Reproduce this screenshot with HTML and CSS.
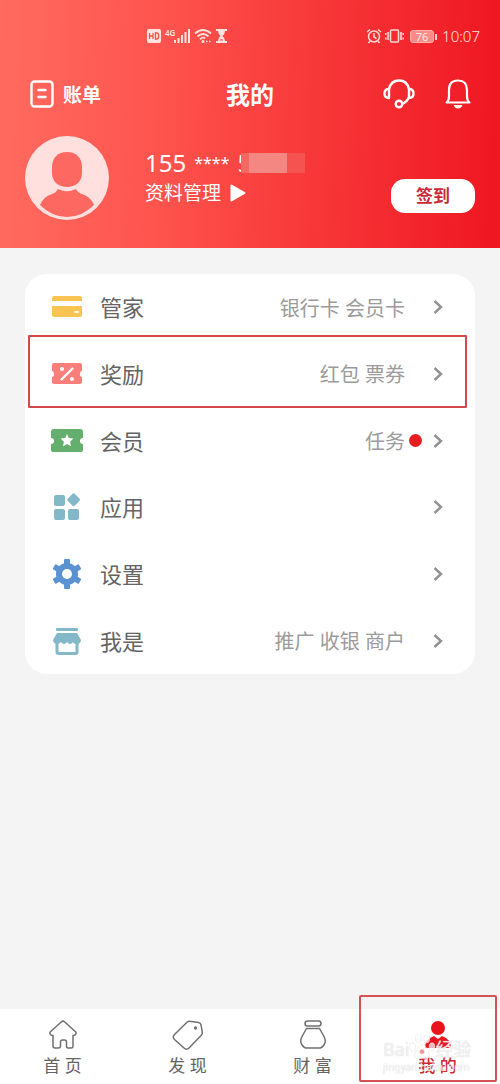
FILE: index.html
```html
<!DOCTYPE html>
<html lang="zh-CN">
<head>
<meta charset="utf-8">
<meta name="viewport" content="width=device-width, initial-scale=1">
<title>我的</title>
<link rel="stylesheet" href="styles.css">
</head>
<body>
<div class="app">
  <header class="header">
    <div class="status">
      <div class="status-group">
        <svg width="14" height="14" viewBox="0 0 14 14"><rect width="14" height="14" rx="2" fill="#ffe3e0"/><path d="M2.500 4v6M6 4v6M2.500 7H6M8.500 4v6h1.200q2 0 2-3t-2-3z" fill="none" stroke="#f0524c" stroke-width="1.300"/></svg>
        <span class="net">4G</span>
        <svg class="signal" width="16" height="14" viewBox="0 0 16 14"><path d="M1 11v3M4.500 9v5M8 6v8M11.500 3v11M15 0v14" stroke="#ffe3e0" stroke-width="2"/></svg>
        <svg width="18" height="14" viewBox="0 0 18 14" fill="none" stroke="#ffe3e0" stroke-width="1.700"><path d="M1 4.500Q9-2.500 17 4.500M3.500 7.500Q9 2.500 14.500 7.500M6 10.300Q9 7.500 11 9.500"/><circle cx="9" cy="12.500" r=".7"/><path d="M12 12.500h1.500M15 12.500h1.500"/></svg>
        <svg width="11" height="14" viewBox="0 0 11 14"><path d="M0 0h11v2H0zM0 12h11v2H0zM2 2h7q0 3-2.500 5Q9 9 9 12H2q0-3 2.500-5Q2 5 2 2z" fill="#ffe3e0"/><path d="M3.500 11.500q2-3 4 0z" fill="#f0524c"/></svg>
      </div>
      <div class="status-group right">
        <svg width="16" height="16" viewBox="0 0 16 16" fill="none" stroke="#ffd8d4" stroke-width="1.500"><circle cx="8" cy="8.500" r="5.500"/><path d="M8 5v4l2.500 1.500M1 4l3-2.500M15 4l-3-2.500M4 13l-1.500 2M12 13l1.500 2"/></svg>
        <svg width="19" height="14" viewBox="0 0 19 14" fill="none" stroke="#ffd8d4" stroke-width="1.600"><rect x="5.500" y="1" width="8" height="12" rx="1"/><path d="M3 3v8M16 3v8M.8 4v2M.8 8.500v2M18.200 4v2M18.200 8.500v2"/></svg>
        <span class="battery">76</span>
        <time class="clock">10:07</time>
      </div>
    </div>
    <div class="topbar">
      <button class="bill">
        <svg width="24" height="28" viewBox="0 0 24 28" fill="none" stroke="#fff" stroke-width="2.400" stroke-linecap="round"><rect x="1.500" y="1.500" width="21" height="25" rx="3"/><path d="M8.500 10h7M8.500 17h7"/></svg>
        <span>账单</span>
      </button>
      <h1 class="title">我的</h1>
      <div class="actions">
        <button aria-label="客服"><svg width="32" height="30" viewBox="0 0 32 30" fill="none" stroke="#fff" stroke-width="2.400"><path d="M6 10Q8 1.500 16 1.500T26 10M26 18q-2 5-7 7"/><path d="M6 10v9Q1.500 19 1.500 14.500T6 10zM26 10q4.500 0 4.500 4.500T26 19z" stroke-linejoin="round"/><circle cx="16" cy="25" r="3.300"/></svg></button>
        <button aria-label="通知"><svg width="26" height="30" viewBox="0 0 26 30" fill="none" stroke="#fff" stroke-width="2.200" stroke-linejoin="round"><path d="M1.500 23.500q2.500-2 2.500-6V11q0-9.500 9-9.500T22 11v6.500q0 4 2.500 6z"/><path d="M8.500 26h9q-1.500 3.500-4.500 3.500T8.500 26z" fill="#fff" stroke="none"/></svg></button>
      </div>
    </div>
    <div class="profile">
      <svg width="84" height="84" viewBox="0 0 84 84"><circle cx="42" cy="42" r="42" fill="#ffe0de"/><path d="M27 31C27 22 33 16 42 16s15 6 15 15v6c0 9-7 14-15 14s-15-5-15-14z" fill="#fd6860"/><path d="M33 53q9 4.500 18 0 2 4 6 5 9 3 12 11Q57 81 42 81T15 69q3-8 12-11 4-1 6-5z" fill="#fd6860"/></svg>
      <div class="who">
        <div class="phone"><span>155</span><span class="stars">****</span><span>5</span><span class="mask"></span></div>
        <a class="manage" href="#">资料管理<svg width="16" height="18" viewBox="0 0 16 18"><path d="M1.500 1.500v15L14.500 9z" fill="#fff" stroke="#fff" stroke-width="2" stroke-linejoin="round"/></svg></a>
      </div>
      <button class="checkin">签到</button>
    </div>
  </header>

  <main class="main">
    <nav class="card">
      <a class="row" href="#">
        <svg width="32" height="32" viewBox="0 0 32 32"><path d="M3 5h26q2 0 2 2v3H1V7q0-2 2-2zM1 15h30v9q0 2-2 2H3q-2 0-2-2z" fill="#fac452"/><rect x="23" y="20" width="5" height="2" rx="1" fill="#fff"/></svg>
        <span class="label">管家</span><span class="detail">银行卡 会员卡</span>
        <svg class="chev" width="10" height="16" viewBox="0 0 10 16"><path d="M1.500 2l6.500 6-6.500 6"/></svg>
      </a>
      <a class="row marked" href="#">
        <svg width="32" height="32" viewBox="0 0 32 32"><path d="M3 5h26q2 0 2 2v6q-2 0-2 3t2 3v5q0 2-2 2H3q-2 0-2-2v-5q2 0 2-3t-2-3V7q0-2 2-2z" fill="#fa7e79"/><path d="M10.500 21.500L21.500 10.500" stroke="#fff" stroke-width="2.400" stroke-linecap="round"/><circle cx="11" cy="11" r="2" fill="#fff"/><circle cx="21" cy="21" r="2" fill="#fff"/></svg>
        <span class="label">奖励</span><span class="detail">红包 票券</span>
        <svg class="chev" width="10" height="16" viewBox="0 0 10 16"><path d="M1.500 2l6.500 6-6.500 6"/></svg>
      </a>
      <a class="row" href="#">
        <svg width="32" height="32" viewBox="0 0 32 32"><path d="M3 4h26q3 0 3 3v6q-3 0-3 3t3 3v6q0 2-3 2H3q-3 0-3-2v-6q3 0 3-3t-3-3V7q0-3 3-3z" fill="#64ae6e"/><path d="M16 9l1.900 4.100 4.500.5-3.300 3.100.9 4.500-4-2.200-4 2.200.9-4.500-3.300-3.100 4.500-.5z" fill="#fff"/></svg>
        <span class="label">会员</span><span class="detail">任务</span><i class="dot"></i>
        <svg class="chev" width="10" height="16" viewBox="0 0 10 16"><path d="M1.500 2l6.500 6-6.500 6"/></svg>
      </a>
      <a class="row" href="#">
        <svg width="32" height="32" viewBox="0 0 32 32" fill="#84b8c8"><rect x="3" y="4" width="11" height="11" rx="2"/><rect x="3" y="18" width="11" height="11" rx="2"/><rect x="17" y="18" width="11" height="11" rx="2"/><path d="M21.600 2.700q1-1 2 0l5 5q1 1 0 2l-5 5q-1 1-2 0l-5-5q-1-1 0-2z"/></svg>
        <span class="label">应用</span><span class="detail"></span>
        <svg class="chev" width="10" height="16" viewBox="0 0 10 16"><path d="M1.500 2l6.500 6-6.500 6"/></svg>
      </a>
      <a class="row" href="#">
        <svg width="32" height="32" viewBox="0 0 32 32"><g fill="#5b93d2"><circle cx="16" cy="16" r="11"/><rect id="tooth" x="13" y="1" width="6" height="30" rx="1"/><use href="#tooth" transform="rotate(60 16 16)"/><use href="#tooth" transform="rotate(120 16 16)"/></g><circle cx="16" cy="16" r="5" fill="#fff"/></svg>
        <span class="label">设置</span><span class="detail"></span>
        <svg class="chev" width="10" height="16" viewBox="0 0 10 16"><path d="M1.500 2l6.500 6-6.500 6"/></svg>
      </a>
      <a class="row" href="#">
        <svg width="32" height="32" viewBox="0 0 32 32" fill="#84b8c8"><rect x="5" y="3" width="22" height="3" rx="1"/><path d="M6 8h20l4 7q-.5 4-4 4t-4-2q-1.500 2-3 2t-3-2q-1.500 2-3 2t-3-2q-1 2-4 2-3.500 0-4-4z"/><path d="M6 18v9q0 1.500 1.500 1.500h17Q26 28.500 26 27v-9" fill="none" stroke="#84b8c8" stroke-width="3"/></svg>
        <span class="label">我是</span><span class="detail">推广 收银 商户</span>
        <svg class="chev" width="10" height="16" viewBox="0 0 10 16"><path d="M1.500 2l6.500 6-6.500 6"/></svg>
      </a>
    </nav>
  </main>

  <nav class="tabs">
    <a class="tab" href="#">
      <svg width="32" height="32" viewBox="0 0 32 32"><path d="M14.500 2.800q1.500-1.300 3 0l11 10q1.500 1.700-.5 3.200l-2 .5V27q0 2-2 2h-3q-1.500 0-1.500-2v-4q0-2-2-2h-2q-2 0-2 2v4q0 2-2 2H8q-2 0-2-2V16.500L4 16q-2-1.500-.5-3.200z"/></svg>
      <span>首 页</span>
    </a>
    <a class="tab" href="#">
      <svg width="32" height="32" viewBox="0 0 32 32"><path d="M18 2.200l8.500 1.200q2 .4 2.500 2.300L30.300 13q.3 2-1 3.300L17 29q-2.500 2.500-5 0L2.500 20.500q-2.500-2.500 0-5L15 3.200q1.400-1.300 3-1z"/><circle cx="23.500" cy="9" r=".9"/></svg>
      <span>发 现</span>
    </a>
    <a class="tab" href="#">
      <svg width="32" height="32" viewBox="0 0 32 32"><rect x="8" y="2" width="16" height="5" rx="2.500"/><path d="M9.500 9.500h13q2 3.500 4.500 8 2.500 5 0 8.500-2 3-5 3H10q-3 0-5-3-2.500-3.500 0-8.500 2.500-4.500 4.500-8z"/></svg>
      <span>财 富</span>
    </a>
    <a class="tab active" href="#">
      <svg width="32" height="32" viewBox="0 0 32 32"><circle cx="16" cy="9" r="7"/><path d="M3 29Q3 20 12 17l4 3 4-3q9 3 9 12z"/></svg>
      <span>我 的</span>
    </a>
    <div class="highlight"></div>
    <div class="watermark">
      <div class="brand">Bai<svg width="26" height="26" viewBox="0 0 22 22"><ellipse cx="3" cy="11" rx="2.500" ry="3.500"/><ellipse cx="8" cy="4" rx="2.500" ry="3.500"/><ellipse cx="15" cy="4" rx="2.500" ry="3.500"/><ellipse cx="19.500" cy="11" rx="2.500" ry="3.500"/><path d="M11 9q3 0 5 5 3 6-1 7-4-1-8 0-4-1-1-7 2-5 5-5z"/><circle class="eye" cx="11" cy="15" r="2"/></svg>经验</div>
      <div class="site">jingyan.baidu.com</div>
    </div>
  </nav>
</div>
</body>
</html>
```
FILE: styles.css
```css
* { box-sizing: border-box; }
body {
  margin: 0;
  background: #f4f4f4;
  font-family: "Noto Sans", "Noto Sans CJK SC", sans-serif;
  color: #646464;
}
a { color: inherit; text-decoration: none; }
button { border: 0; padding: 0; background: none; color: inherit; font: inherit; cursor: pointer; }
svg { display: block; flex: none; }

.app { min-height: 100vh; display: flex; flex-direction: column; }

.header {
  background: linear-gradient(92deg, #ff6b60 0%, #fe544e 32%, #f83c3c 58%, #ef1822 98%);
  color: #fff;
  padding: 24px 25px 28px;
}
.status { display: flex; justify-content: space-between; height: 24px; align-items: center; padding-left: 122px; margin-right: -5px; }
.status-group { display: flex; align-items: center; gap: 4px; }
.status-group.right { gap: 3px; }
.net { font-size: 8px; line-height: 8px; font-weight: 600; align-self: flex-start; color: #ffe3e0; }
.signal { margin-left: -5px; }
.battery {
  position: relative;
  width: 24px; height: 13px;
  margin: 0 5px 0 3px;
  border: 1px solid #ffb3ae;
  border-radius: 3px;
  background: #f98b88;
  font-size: 11px; line-height: 11px;
  text-align: center;
  color: #ffe9e7;
}
.battery::after { content: ""; position: absolute; right: -4px; top: 3px; width: 2px; height: 6px; background: #ffd8d4; }
.clock { font-size: 15px; line-height: 24px; font-weight: 300; color: #ffe3e0; }

.topbar { display: grid; grid-template-columns: 1fr auto 1fr; align-items: center; height: 48px; margin-top: 22px; }
.bill { display: flex; align-items: center; gap: 9px; padding-left: 5px; font-size: 19px; font-weight: 700; }
.title { margin: 0; padding-top: 2px; font-size: 24px; line-height: 32px; font-weight: 700; }
.actions { display: flex; justify-content: flex-end; gap: 30px; padding-right: 4px; }

.profile { display: flex; align-items: center; margin-top: 18px; }
.who { margin-left: 36px; flex: 1; padding-bottom: 2px; }
.phone { display: flex; align-items: center; gap: 8px; font-size: 24px; line-height: 32px; }
.stars { font-size: 16px; }
.mask { width: 64px; height: 20px; margin-left: -18px; background: linear-gradient(90deg, #f66862 0 8px, #f58783 8px 46px, #f5534f 46px); }
.manage { display: flex; align-items: center; gap: 9px; font-size: 19px; line-height: 28px; }
.checkin {
  width: 84px; height: 34px;
  margin-top: 36px;
  border-radius: 14px;
  background: #fff;
  color: #cb2735;
  font-size: 17px; font-weight: 700; line-height: 32px;
}

.main { flex: 1; padding: 26px 25px; }
.card { display: grid; grid-auto-rows: 1fr; min-height: 400px; border-radius: 22px; background: #fff; }
.row { position: relative; display: flex; align-items: center; padding: 0 32px 0 26px; }
.label { margin-left: 17px; font-size: 22px; line-height: 32px; }
.detail { margin-left: auto; padding-top: 3px; font-size: 20px; line-height: 28px; color: #9b9b9b; }
.dot { width: 13px; height: 13px; margin: 0 -17px 0 4px; border-radius: 50%; background: #e61f23; }
.chev { margin-left: 28px; fill: none; stroke: #929292; stroke-width: 2.4; }
.marked::after { content: ""; position: absolute; inset: -6px 8px -1px 3px; border: 2px solid #d2494b; border-radius: 1px; }

.tabs { position: relative; display: grid; grid-template-columns: repeat(4, 1fr); background: #fff; }
.tab { display: flex; flex-direction: column; align-items: center; gap: 3px; padding: 10px 0 6px; font-size: 17px; line-height: 24px; }
.tab svg { fill: none; stroke: #707070; stroke-width: 1.5; }
.tab.active { color: #d02733; }
.tab.active span { font-weight: 500; }
.tab.active svg { fill: #e8151e; stroke: none; }
.highlight { position: absolute; top: -14px; right: 3px; bottom: 2px; width: 138px; border: 2px solid #d65255; border-radius: 2px; }
.watermark { position: absolute; right: 25px; bottom: 10px; width: 92px; color: rgba(255, 255, 255, .7); text-shadow: 0 0 1px #ccc; }
.brand { display: flex; align-items: flex-end; font-size: 18px; line-height: 22px; }
.brand svg { fill: rgba(255, 255, 255, .7); stroke: #e4e4e4; stroke-width: .5; }
.brand .eye { fill: #e8151e; fill-opacity: .5; }
.site { font-size: 10px; line-height: 14px; }
```
